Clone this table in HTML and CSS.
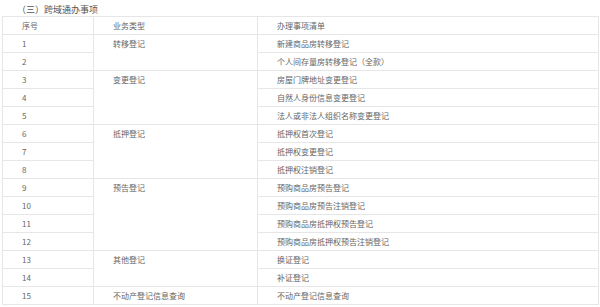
FILE: index.html
```html
<!DOCTYPE html>
<html lang="zh">
<head>
<meta charset="utf-8">
<link rel="stylesheet" href="styles.css">
</head>
<body>
<div class="title">（三）跨域通办事项</div>
<table class="tbl">
  <colgroup><col class="c1"><col class="c2"><col class="c3"></colgroup>
  <tr><td>序号</td><td>业务类型</td><td>办理事项清单</td></tr>
  <tr><td>1</td><td class="m" rowspan="2">转移登记</td><td>新建商品房转移登记</td></tr>
  <tr><td>2</td><td>个人间存量房转移登记（全款）</td></tr>
  <tr><td>3</td><td class="m" rowspan="3">变更登记</td><td>房屋门牌地址变更登记</td></tr>
  <tr><td>4</td><td>自然人身份信息变更登记</td></tr>
  <tr><td>5</td><td>法人或非法人组织名称变更登记</td></tr>
  <tr><td>6</td><td class="m" rowspan="3">抵押登记</td><td>抵押权首次登记</td></tr>
  <tr><td>7</td><td>抵押权变更登记</td></tr>
  <tr><td>8</td><td>抵押权注销登记</td></tr>
  <tr><td>9</td><td class="m" rowspan="4">预告登记</td><td>预购商品房预告登记</td></tr>
  <tr><td>10</td><td>预购商品房预告注销登记</td></tr>
  <tr><td>11</td><td>预购商品房抵押权预告登记</td></tr>
  <tr><td>12</td><td>预购商品房抵押权预告注销登记</td></tr>
  <tr><td>13</td><td class="m" rowspan="2">其他登记</td><td>换证登记</td></tr>
  <tr><td>14</td><td>补证登记</td></tr>
  <tr><td>15</td><td>不动产登记信息查询</td><td>不动产登记信息查询</td></tr>
</table>
</body>
</html>
```
FILE: styles.css
```css
html, body { margin: 0; padding: 0; background: #fff; }
body {
  font-family: "Noto Sans CJK SC", "Noto Sans", sans-serif;
  color: #555;
}
.title {
  font-size: 9px;
  line-height: 12px;
  color: #555;
  padding: 4px 0 0 17px;
  height: 12px;
}
.tbl {
  margin: 0 0 0 2px;
  border-collapse: collapse;
  table-layout: fixed;
  width: 596px;
}
.c1 { width: 91px; }
.c2 { width: 164px; }
.c3 { width: 341px; }
.tbl td {
  border: 1px solid #e6e6e6;
  height: 17px;
  padding: 0 0 0 19px;
  font-size: 8px;
  line-height: 17px;
  color: #666;
  white-space: nowrap;
  vertical-align: middle;
}
.tbl td.m { vertical-align: top; }
```
